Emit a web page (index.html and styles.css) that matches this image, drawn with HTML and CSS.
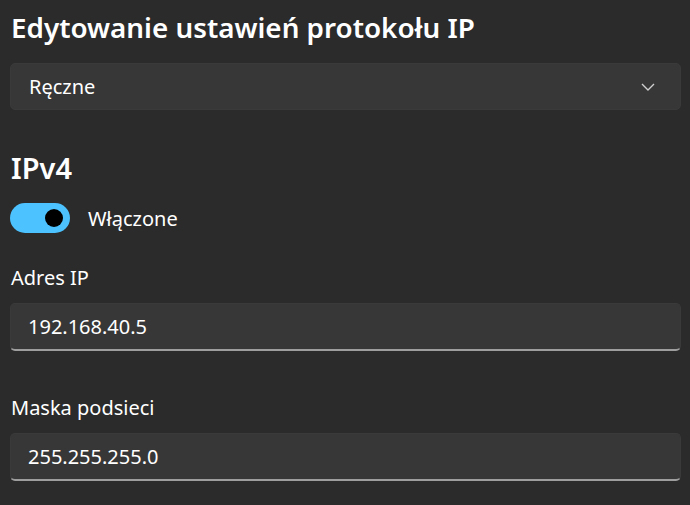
FILE: index.html
```html
<!DOCTYPE html>
<html lang="pl">
<head>
    <meta charset="UTF-8">
    <meta name="viewport" content="width=device-width, initial-scale=1.0">
    <title>Edytowanie ustawień protokołu IP</title>
    <link rel="stylesheet" href="styles.css">
</head>
<body>
    <div class="dialog">
        <h1 class="title">Edytowanie ustawień protokołu IP</h1>

        <div class="select">
            <span>Ręczne</span>
            <svg class="chevron" width="14" height="8" viewBox="0 0 14 8">
                <path d="M1 1 L7 7 L13 1" fill="none" stroke="#cfcfcf" stroke-width="1.4"/>
            </svg>
        </div>

        <h2 class="section">IPv4</h2>
        <div class="toggle-row">
            <div class="toggle"><span class="knob"></span></div>
            <span class="toggle-label">Włączone</span>
        </div>

        <label class="field-label">Adres IP</label>
        <div class="input">192.168.40.5</div>

        <label class="field-label mask">Maska podsieci</label>
        <div class="input">255.255.255.0</div>
    </div>
</body>
</html>
```
FILE: styles.css
```css
body {
    margin: 0;
    padding: 0;
    background: #2b2b2b;
    color: #ffffff;
    font-family: 'Noto Sans', 'Open Sans', sans-serif;
    overflow: hidden;
}
.dialog {
    padding: 0 9px 0 10px;
}
.title {
    font-size: 27.8px;
    font-weight: 600;
    margin: 0;
    padding: 7px 0 0 1px;
    line-height: 40px;
}
.select {
    height: 47px;
    margin-top: 16px;
    background: #373737;
    border: 1px solid #3a3a3a;
    border-radius: 5px;
    box-sizing: border-box;
    display: flex;
    align-items: center;
    justify-content: space-between;
    padding: 0 25px 0 18px;
    font-size: 20px;
}
.chevron {
    display: block;
}
.section {
    font-size: 29px;
    font-weight: 600;
    margin: 0;
    padding: 38px 0 0 1px;
    line-height: 40px;
}
.toggle-row {
    display: flex;
    align-items: center;
    gap: 18px;
    margin-top: 15px;
}
.toggle {
    width: 60px;
    height: 30px;
    border-radius: 15px;
    background: #4cc2ff;
    position: relative;
}
.knob {
    position: absolute;
    right: 7px;
    top: 6px;
    width: 18px;
    height: 18px;
    border-radius: 50%;
    background: #000;
}
.toggle-label {
    font-size: 20px;
}
.field-label {
    display: block;
    font-size: 20px;
    line-height: 28px;
    margin-top: 31px;
    padding-left: 1px;
}
.field-label.mask {
    margin-top: 43px;
}
.input {
    height: 48px;
    margin-top: 11px;
    background: #373737;
    border: 1px solid #3a3a3a;
    border-bottom: 2px solid #9e9e9e;
    border-radius: 5px;
    box-sizing: border-box;
    display: flex;
    align-items: center;
    padding: 0 17px;
    font-size: 20px;
}
```
